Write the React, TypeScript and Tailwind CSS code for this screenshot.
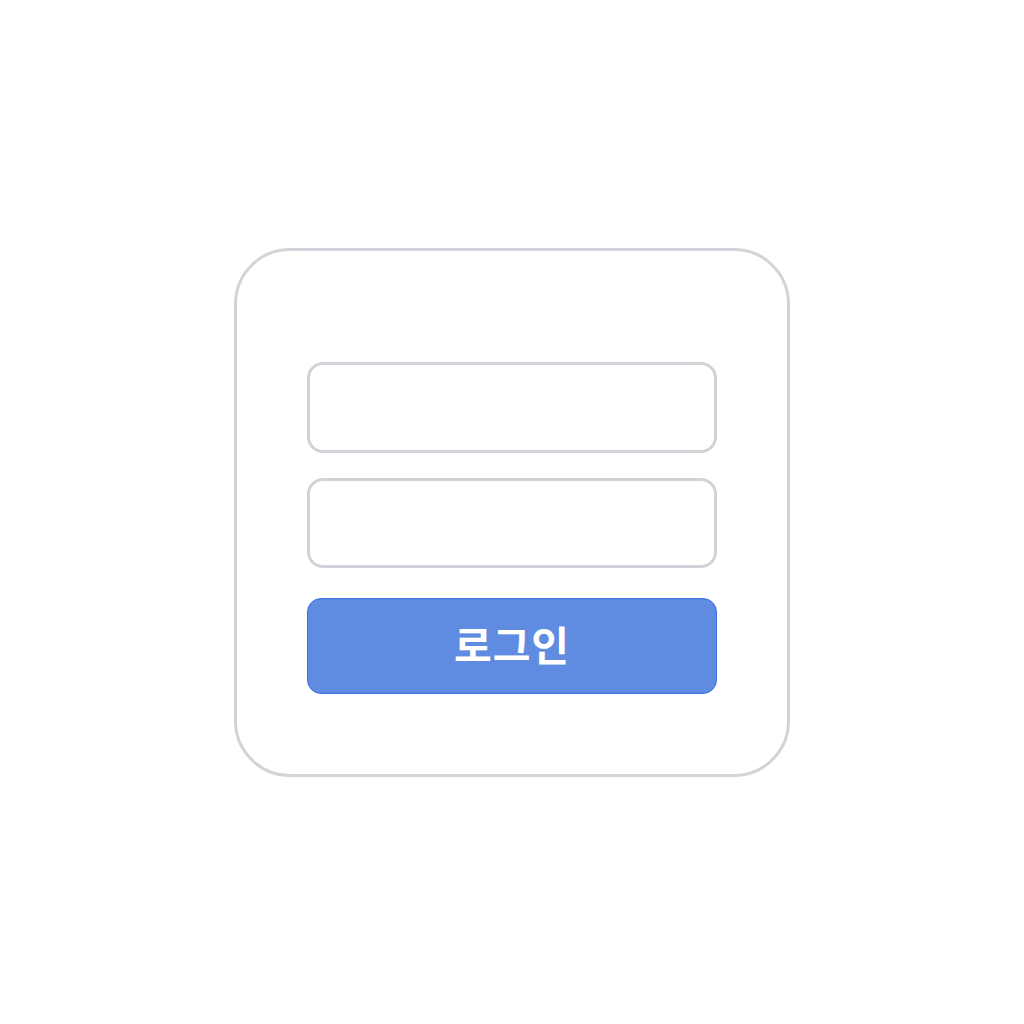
import React from 'react';

export default function App() {
  return (
    <div className="w-[1024px] h-[1024px] bg-white flex items-center justify-center">
      {/* Login card */}
      <div className="w-[556px] h-[529px] rounded-[56px] border-[3px] border-[#d3d3d9] bg-white flex flex-col items-center pt-[111px]">
        <input
          className="w-[410px] h-[91px] rounded-[16px] border-[3px] border-[#d1d1d7] bg-white outline-none"
          type="text"
        />
        <input
          className="w-[410px] h-[90px] mt-[25px] rounded-[16px] border-[3px] border-[#d1d1d7] bg-white outline-none"
          type="password"
        />
        <button
          className="w-[410px] h-[96px] mt-[30px] rounded-[14px] border border-[#3d6fe0] bg-[#5f8ce0] text-white text-[41px] font-bold tracking-[1px] flex items-center justify-center pb-[3px]"
          style={{ fontFamily: '"Noto Sans CJK KR", "Noto Sans", sans-serif' }}
        >
          로그인
        </button>
      </div>
    </div>
  );
}
